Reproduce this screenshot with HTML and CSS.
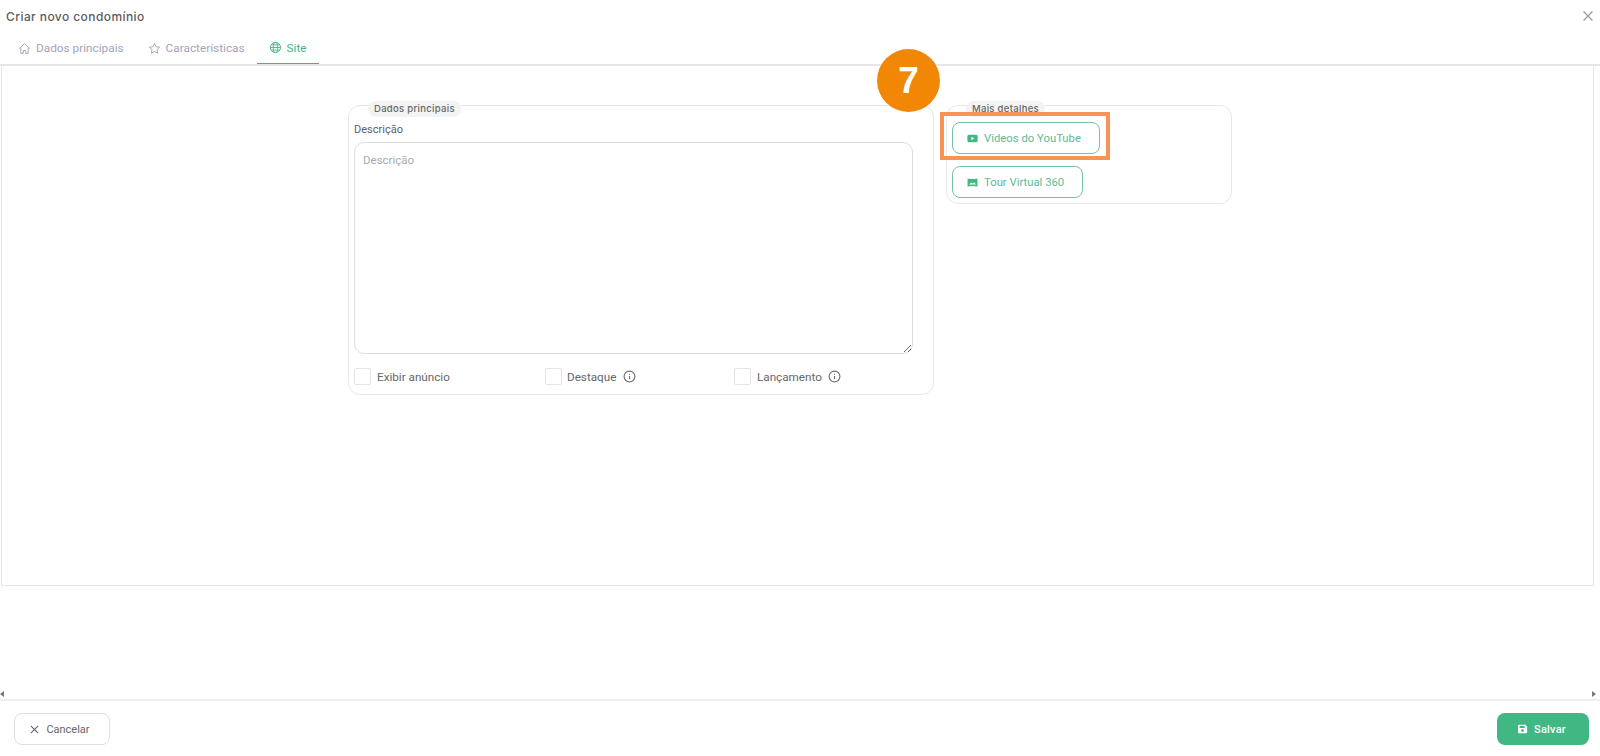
FILE: index.html
```html
<!DOCTYPE html>
<html lang="pt-BR">
<head>
<meta charset="utf-8">
<title>Criar novo condomínio</title>
<link rel="stylesheet" href="styles.css">
</head>
<body>
<div class="app">
  <header class="topbar">
    <h1 class="title">Criar novo condomínio</h1>
    <svg class="close" viewBox="0 0 12 12"><path d="M1.5 1.5l9 9M10.5 1.5l-9 9"/></svg>
  </header>
  <nav class="tabs">
    <div class="tab">
      <svg class="tab-icon" viewBox="0 0 16 16"><path d="M1.5 8L8 2l6.500 6M3.500 6.500V14h3v-3.500h3V14h3V6.500"/></svg>
      <span>Dados principais</span>
    </div>
    <div class="tab">
      <svg class="tab-icon" viewBox="0 0 16 16"><path d="M8 1.800l1.900 4 4.400.6-3.200 3 .8 4.400L8 11.700l-3.900 2.100.8-4.400-3.200-3 4.400-.6z"/></svg>
      <span>Características</span>
    </div>
    <div class="tab tab-active">
      <svg class="tab-icon" viewBox="0 0 16 16"><circle cx="8" cy="8" r="6.300"/><ellipse cx="8" cy="8" rx="2.800" ry="6.300"/><path d="M1.700 8h12.600M2.600 4.800h10.800M2.600 11.200h10.800"/></svg>
      <span>Site</span>
    </div>
  </nav>
  <main class="frame">
    <section class="panel panel-main">
      <span class="legend">Dados principais</span>
      <label class="field-label" for="desc">Descrição</label>
      <textarea id="desc" class="textarea" placeholder="Descrição"></textarea>
      <div class="checks">
        <label class="check check-a"><span class="box"></span><span>Exibir anúncio</span></label>
        <label class="check check-b"><span class="box"></span><span>Destaque</span>
          <svg class="info" viewBox="0 0 12 12"><circle cx="6" cy="6" r="5"/><path d="M6 5.500v3M6 3.400v.9"/></svg></label>
        <label class="check"><span class="box"></span><span>Lançamento</span>
          <svg class="info" viewBox="0 0 12 12"><circle cx="6" cy="6" r="5"/><path d="M6 5.500v3M6 3.400v.9"/></svg></label>
      </div>
    </section>
    <section class="panel panel-side">
      <span class="legend legend-side">Mais detalhes</span>
      <div class="side-buttons">
        <div class="highlight-wrap">
          <button class="btn-outline btn-yt" type="button">
            <svg class="btn-icon" viewBox="0 0 12 10"><path fill-rule="evenodd" d="M2 .8h8a1.700 1.700 0 0 1 1.700 1.700v5A1.700 1.700 0 0 1 10 9.200H2A1.700 1.700 0 0 1 .3 7.500v-5A1.700 1.700 0 0 1 2 .8zM4.800 3.100v3.800L8 5z"/></svg>
            <span>Vídeos do YouTube</span>
          </button>
          <span class="highlight"></span>
          <span class="step">7</span>
        </div>
        <button class="btn-outline btn-tour" type="button">
          <svg class="btn-icon" viewBox="0 0 12 10"><path fill-rule="evenodd" d="M.5.500C4 1.300 8 1.300 11.500.500v9C8 8.700 4 8.700.5 9.500zM2 7.300h8L7.800 4.600 6.300 6.300 5 5z"/></svg>
          <span>Tour Virtual 360</span>
        </button>
      </div>
    </section>
  </main>
  <div class="scrollbar">
    <span class="arrow arrow-left"></span>
    <span class="arrow arrow-right"></span>
  </div>
  <footer class="footer">
    <button class="btn-cancel" type="button">
      <svg class="cancel-icon" viewBox="0 0 12 12"><path d="M2 2l8 8M10 2l-8 8"/></svg>
      <span>Cancelar</span>
    </button>
    <button class="btn-save" type="button">
      <svg class="save-icon" viewBox="0 0 12 12"><path fill-rule="evenodd" d="M1.500 1h7.300L11 3.200v6.300A1.500 1.500 0 0 1 9.500 11h-8A1.500 1.500 0 0 1 0 9.500v-7A1.500 1.500 0 0 1 1.500 1zM2 2.500v2.300h6V2.500zM5.500 6.200a1.700 1.700 0 1 0 0 3.400 1.700 1.700 0 0 0 0-3.400z"/></svg>
      <span>Salvar</span>
    </button>
  </footer>
</div>
</body>
</html>
```
FILE: styles.css
```css
* { box-sizing: border-box; }
html, body { margin: 0; padding: 0; background: #fff; }
body { font-family: Roboto, "Liberation Sans", sans-serif; color: #5f6368; overflow: hidden; }
.app { width: 1600px; height: 756px; display: flex; flex-direction: column; }

.topbar { height: 32px; display: flex; align-items: center; justify-content: space-between; padding: 0 6px 0 6px; }
.title { margin: 0; font-family: Inter, "Open Sans", sans-serif; font-size: 12px; font-weight: 500; color: #5c5c5c; letter-spacing: .42px; }
.close { width: 12px; height: 12px; fill: none; stroke: #9a9a9a; stroke-width: 1.2; }

.tabs { height: 34px; display: flex; padding-left: 6px; border-bottom: 2px solid #e6e6e6; }
.tab { height: 32px; padding: 0 12px; display: flex; align-items: center; gap: 5px; font-size: 11.800px; color: #a3a3bd; }
.tab-icon { width: 13px; height: 13px; fill: none; stroke: #9d9db2; stroke-width: 1.100; }
.tab-active { color: #41b883; border-bottom: 1px solid #41b883; }
.tab-active .tab-icon { stroke: #41b883; }

.frame { width: 1593px; height: 520px; margin-left: 1px; border: 1px solid #e6e6e6; border-top: 0; padding: 39px 0 0 346px; display: flex; align-items: flex-start; gap: 12px; }
.panel { position: relative; border: 1px solid #e8e8e8; border-radius: 12px; }
.panel-main { width: 586px; height: 290px; padding: 15px 5px 0; display: flex; flex-direction: column; }
.panel-side { width: 286px; height: 99px; padding: 16px 5px 0; }
.legend { position: absolute; left: 19px; top: -5px; height: 16px; padding: 0 6px; line-height: 16px; border-radius: 8px; background: #f3f3f3; font-family: Inter, "Open Sans", sans-serif; font-size: 9.500px; font-weight: 500; letter-spacing: .3px; color: #666; }
.legend-side { top: -5px; }

.field-label { font-size: 11px; line-height: 18px; color: #5f5f5f; height: 21px; }
.textarea { display: block; width: 559px; height: 212px; padding: 10px 8px; border: 1px solid #dcdcdc; border-radius: 10px; font-family: Roboto, "Liberation Sans", sans-serif; font-size: 11.500px; color: #666; outline: 0; }
.textarea::placeholder { color: #aaa; opacity: 1; }

.checks { display: flex; margin-top: 14px; }
.check { display: flex; align-items: center; gap: 6px; height: 17px; font-size: 11.700px; color: #666; }
.check-a { width: 191px; }
.check-b { width: 189px; gap: 5px; }
.check-b .info { margin-left: 2px; }
.box { width: 17px; height: 17px; border: 1px solid #e3e3e3; border-radius: 2px; background: #fff; }
.info { width: 13px; height: 13px; fill: none; stroke: #6b6b6b; stroke-width: 1; }

.side-buttons { display: flex; flex-direction: column; align-items: flex-start; gap: 12px; }
.highlight-wrap { position: relative; display: flex; }
.btn-outline { height: 32px; display: flex; align-items: center; gap: 6px; padding: 0 0 0 14px; background: #fff; border: 1px solid #74c2a1; border-radius: 8px; font-family: Roboto, "Liberation Sans", sans-serif; font-size: 11.300px; color: #62b994; }
.btn-yt { width: 148px; }
.btn-tour { width: 131px; }
.btn-icon { width: 11px; height: 9px; fill: #41b883; }
.highlight { position: absolute; left: -12px; top: -10px; width: 170px; height: 48px; border: 4px solid #f79455; }
.step { position: absolute; left: -75px; top: -73px; width: 63px; height: 63px; border-radius: 50%; background: #f28705; color: #fff; font-family: "Liberation Sans", sans-serif; font-size: 37px; font-weight: 700; line-height: 63px; text-align: center; }

.scrollbar { height: 113px; display: flex; align-items: flex-end; justify-content: space-between; flex: none; }
.arrow { width: 0; height: 0; border-top: 3px solid transparent; border-bottom: 3px solid transparent; margin-bottom: 2px; }
.arrow-left { border-right: 4px solid #777; }
.arrow-right { border-left: 4px solid #777; margin-right: 4px; }

.footer { flex: 1; border-top: 2px solid #f0f0f0; padding: 12px 11px 0 14px; display: flex; justify-content: space-between; align-items: flex-start; }
.btn-cancel, .btn-save { height: 32px; border-radius: 8px; display: flex; align-items: center; justify-content: center; gap: 6px; font-family: Roboto, "Liberation Sans", sans-serif; font-size: 11px; }
.btn-cancel { width: 96px; padding: 0 5px 0 0; background: #fff; border: 1px solid #e0e0e0; color: #666; }
.cancel-icon { width: 11px; height: 11px; fill: none; stroke: #666; stroke-width: 1.200; }
.btn-save { width: 92px; padding: 0 2px 0 0; gap: 6px; background: #41b883; border: 0; color: #fff; font-weight: 500; letter-spacing: .2px; }
.save-icon { width: 10px; height: 10px; fill: #fff; }
```
